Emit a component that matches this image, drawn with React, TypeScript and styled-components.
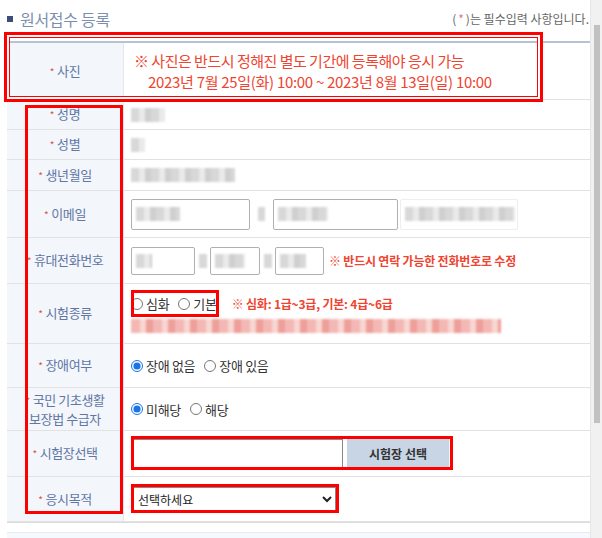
import React from "react";
import styled, { createGlobalStyle } from "styled-components";

const GlobalStyle = createGlobalStyle`
  html, body {
    margin: 0;
    padding: 0;
    background: #ffffff;
    font-family: "Noto Sans CJK KR", "Noto Sans", sans-serif;
    overflow: hidden;
  }
`;

const Page = styled.div`
  display: flex;
  width: 602px;
  height: 538px;
  overflow: hidden;
`;

const Main = styled.div`
  position: relative;
  width: 583px;
  padding-left: 7px;
`;

const ScrollTrack = styled.div`
  width: 12px;
  background: #f1f1f1;
  border-left: 1px solid #e6e6e6;
  padding: 25px 3px 0 3px;
  box-sizing: border-box;
`;

const ScrollThumb = styled.div`
  width: 6px;
  height: 398px;
  background: #c1c1c1;
`;

const Header = styled.div`
  display: flex;
  align-items: center;
  justify-content: space-between;
  height: 41px;
  padding-bottom: 4px;
  box-sizing: border-box;
`;

const Title = styled.h2`
  display: flex;
  align-items: center;
  gap: 7px;
  margin: 0;
  font-size: 16px;
  font-weight: 400;
  letter-spacing: -0.3px;
  color: #7d8fae;
`;

const Bullet = styled.span`
  width: 6px;
  height: 6px;
  background: #3d4d7a;
`;

const Note = styled.span`
  font-size: 12px;
  color: #666;
  margin-right: 1px;
  em {
    font-style: normal;
    color: #e37b7b;
    padding: 0 2px;
  }
`;

const Table = styled.div`
  display: grid;
  grid-template-columns: 117px 1fr;
  border-top: 2px solid #b7c2d2;
  border-bottom: 1px solid #dcdcdc;
`;

const Label = styled.div<{ $h: number }>`
  display: flex;
  align-items: center;
  justify-content: center;
  height: ${(p) => p.$h}px;
  background: #f3f6fb;
  border-right: 1px solid #e3e8ef;
  border-bottom: 1px solid #e2e2e2;
  font-size: 13px;
  line-height: 18px;
  letter-spacing: -0.4px;
  color: #6176a5;
  text-align: center;
  box-sizing: border-box;
`;

const Star = styled.span`
  color: #d9534f;
  font-size: 10px;
  margin-right: 3px;
`;

const Cell = styled.div<{ $h: number }>`
  display: flex;
  flex-direction: column;
  justify-content: center;
  gap: 6px;
  height: ${(p) => p.$h}px;
  padding-left: 7px;
  border-bottom: 1px solid #e2e2e2;
  box-sizing: border-box;
`;

const Line = styled.div`
  display: flex;
  align-items: center;
`;

const PhotoNotice = styled.div`
  font-size: 15px;
  line-height: 21px;
  letter-spacing: -0.5px;
  color: #ef4430;
  padding-left: 3px;
`;

const Indent = styled.div`
  padding-left: 14px;
  letter-spacing: -0.3px;
`;

const Smudge = styled.span<{ $w: number; $tone?: "grey" | "pink" }>`
  display: inline-block;
  width: ${(p) => p.$w}px;
  height: 14px;
  background: ${(p) =>
    p.$tone === "pink"
      ? "repeating-linear-gradient(90deg, #f3b8b4 0 9px, #f8d6d2 9px 15px, #ee9f99 15px 22px)"
      : "repeating-linear-gradient(90deg, #d8d8d8 0 8px, #eaeaea 8px 14px, #cfcfcf 14px 20px)"};
  filter: blur(1.2px);
`;

const Field = styled.div<{ $w: number; $h: number; $faint?: boolean }>`
  display: flex;
  align-items: center;
  width: ${(p) => p.$w}px;
  height: ${(p) => p.$h}px;
  padding-left: 4px;
  border: 1px solid ${(p) => (p.$faint ? "#eeeeee" : "#b0b0b0")};
  border-radius: 2px;
  box-sizing: border-box;
  background: #fff;
`;

const Gap = styled.span<{ $w: number }>`
  display: inline-flex;
  justify-content: center;
  width: ${(p) => p.$w}px;
`;

const Warn = styled.span<{ $offset?: number }>`
  color: #ef4430;
  font-size: 12px;
  font-weight: 700;
  letter-spacing: -0.2px;
  margin-left: ${(p) => p.$offset ?? 5}px;
`;

const RadioLabel = styled.label`
  display: inline-flex;
  align-items: center;
  gap: 2px;
  font-size: 13px;
  letter-spacing: -0.3px;
  color: #333;
  margin-right: 9px;
  input {
    margin: 0 1px 0 0;
    width: 12px;
    height: 12px;
    accent-color: #1a73e8;
  }
`;

const SearchInput = styled.input`
  width: 210px;
  height: 30px;
  box-sizing: border-box;
  border: 1px solid #888;
  border-left: none;
  background: #fff;
  margin-left: 2px;
`;

const SearchButton = styled.button`
  width: 102px;
  height: 30px;
  margin-left: 4px;
  border: none;
  background: #c8d5e4;
  font-family: inherit;
  font-size: 12px;
  font-weight: 700;
  color: #333;
`;

const Select = styled.select`
  width: 203px;
  height: 24px;
  margin-left: 2px;
  font-family: inherit;
  font-size: 12px;
  color: #222;
  border: 1px solid #888;
  background: #fff;
`;

const Footer = styled.div`
  margin-top: 9px;
  height: 20px;
  background: #f5f8fc;
  border-top: 1px solid #e6ebf2;
`;

const Mark = styled.div<{ $x: number; $y: number; $w: number; $h: number; $double?: boolean }>`
  position: absolute;
  left: ${(p) => p.$x}px;
  top: ${(p) => p.$y}px;
  width: ${(p) => p.$w}px;
  height: ${(p) => p.$h}px;
  border: 3px solid #ff0000;
  box-sizing: border-box;
  box-shadow: ${(p) => (p.$double ? "inset 0 0 0 2px #ffffff, inset 0 0 0 3px #ff0000" : "none")};
  pointer-events: none;
`;

type Row = { label: React.ReactNode; h: number; body: React.ReactNode };

const rows: Row[] = [
  {
    label: "사진",
    h: 57,
    body: (
      <PhotoNotice>
        <div>※ 사진은 반드시 정해진 별도 기간에 등록해야 응시 가능</div>
        <Indent>2023년 7월 25일(화) 10:00 ~ 2023년 8월 13일(일) 10:00</Indent>
      </PhotoNotice>
    ),
  },
  { label: "성명", h: 30, body: <Smudge $w={34} /> },
  { label: "성별", h: 30, body: <Smudge $w={14} /> },
  { label: "생년월일", h: 31, body: <Smudge $w={104} /> },
  {
    label: "이메일",
    h: 47,
    body: (
      <Line>
        <Field $w={119} $h={31}>
          <Smudge $w={44} />
        </Field>
        <Gap $w={23}>
          <Smudge $w={7} />
        </Gap>
        <Field $w={125} $h={31}>
          <Smudge $w={50} />
        </Field>
        <Field $w={118} $h={31} $faint style={{ marginLeft: 2 }}>
          <Smudge $w={110} />
        </Field>
      </Line>
    ),
  },
  {
    label: "휴대전화번호",
    h: 46,
    body: (
      <Line>
        <Field $w={64} $h={28}>
          <Smudge $w={16} />
        </Field>
        <Gap $w={15}>
          <Smudge $w={8} />
        </Gap>
        <Field $w={50} $h={28}>
          <Smudge $w={30} />
        </Field>
        <Gap $w={15}>
          <Smudge $w={8} />
        </Gap>
        <Field $w={49} $h={28}>
          <Smudge $w={26} />
        </Field>
        <Warn>※ 반드시 연락 가능한 전화번호로 수정</Warn>
      </Line>
    ),
  },
  {
    label: "시험종류",
    h: 60,
    body: (
      <>
        <Line>
          <RadioLabel>
            <input type="radio" name="kind" readOnly />
            심화
          </RadioLabel>
          <RadioLabel>
            <input type="radio" name="kind" readOnly />
            기본
          </RadioLabel>
          <Warn $offset={6}>※ 심화: 1급~3급, 기본: 4급~6급</Warn>
        </Line>
        <Line>
          <Smudge $w={370} $tone="pink" />
        </Line>
      </>
    ),
  },
  {
    label: "장애여부",
    h: 44,
    body: (
      <Line>
        <RadioLabel>
          <input type="radio" name="dis" defaultChecked />
          장애 없음
        </RadioLabel>
        <RadioLabel>
          <input type="radio" name="dis" />
          장애 있음
        </RadioLabel>
      </Line>
    ),
  },
  {
    label: (
      <>
        <Star>*</Star>국민 기초생활
        <br />
        보장법 수급자
      </>
    ),
    h: 43,
    body: (
      <Line>
        <RadioLabel>
          <input type="radio" name="basic" defaultChecked />
          미해당
        </RadioLabel>
        <RadioLabel>
          <input type="radio" name="basic" />
          해당
        </RadioLabel>
      </Line>
    ),
  },
  {
    label: "시험장선택",
    h: 46,
    body: (
      <Line>
        <SearchInput readOnly />
        <SearchButton>시험장 선택</SearchButton>
      </Line>
    ),
  },
  {
    label: "응시목적",
    h: 45,
    body: (
      <Line>
        <Select defaultValue="">
          <option value="">선택하세요</option>
        </Select>
      </Line>
    ),
  },
];

const App: React.FC = () => {
  return (
    <Page>
      <GlobalStyle />
      <Main>
        <Header>
          <Title>
            <Bullet />
            원서접수 등록
          </Title>
          <Note>
            (<em>*</em>)는 필수입력 사항입니다.
          </Note>
        </Header>
        <Table>
          {rows.map((row, i) => (
            <React.Fragment key={i}>
              <Label $h={row.h}>
                {typeof row.label === "string" ? (
                  <span>
                    <Star>*</Star>
                    {row.label}
                  </span>
                ) : (
                  <span>{row.label}</span>
                )}
              </Label>
              <Cell $h={row.h}>{row.body}</Cell>
            </React.Fragment>
          ))}
        </Table>
        <Footer />
        <Mark $x={4} $y={32} $w={539} $h={70} $double />
        <Mark $x={25} $y={105} $w={98} $h={409} />
        <Mark $x={131} $y={290} $w={88} $h={27} />
        <Mark $x={131} $y={436} $w={322} $h={34} />
        <Mark $x={131} $y={484} $w={208} $h={29} />
      </Main>
      <ScrollTrack>
        <ScrollThumb />
      </ScrollTrack>
    </Page>
  );
};

export default App;
